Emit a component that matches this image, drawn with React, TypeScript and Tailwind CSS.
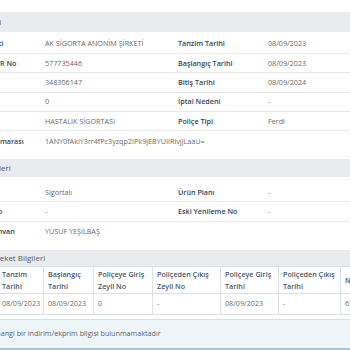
import React from 'react';

type Row = { label: string; value: string; label2?: string; value2?: string };

const policyRows: Row[] = [
  { label: 'Yetki Şirketi', value: 'AK SİGORTA ANONİM ŞİRKETİ', label2: 'Tanzim Tarihi', value2: '08/09/2023' },
  { label: 'Yenileme TR No', value: '577735446', label2: 'Başlangıç Tarihi', value2: '08/09/2023' },
  { label: 'Poliçe No', value: '348306147', label2: 'Bitiş Tarihi', value2: '08/09/2024' },
  { label: 'Tecdit No', value: '0', label2: 'İptal Nedeni', value2: '-' },
  { label: 'Branş', value: 'HASTALIK SİGORTASI', label2: 'Poliçe Tipi', value2: 'Ferdi' },
  { label: 'Kontrol Numarası', value: '1ANY0fAkiY3rr4fPc3yzqp2IPk9jEBYUIIRlvjjLaaU=' },
];

const partyRows: Row[] = [
  { label: 'Rol', value: 'Sigortalı', label2: 'Ürün Planı', value2: '-' },
  { label: 'Sigortalı No', value: '-', label2: 'Eski Yenileme No', value2: '-' },
  { label: 'Sigortalı Unvan', value: 'YUSUF YEŞİLBAŞ' },
];

const columns = [
  { title: 'Sıra', w: 'w-[39px]' },
  { title: 'Tanzim Tarihi', w: 'w-[46px]' },
  { title: 'Başlangıç Tarihi', w: 'w-[50px]' },
  { title: 'Poliçeye Giriş Zeyil No', w: 'w-[59px]' },
  { title: 'Poliçeden Çıkış Zeyil No', w: 'w-[68px]' },
  { title: 'Poliçeye Giriş Tarihi', w: 'w-[58px]' },
  { title: 'Poliçeden Çıkış Tarihi', w: 'w-[62px]' },
  { title: 'Net Prim', w: 'w-[60px]' },
];

const movement = ['1', '08/09/2023', '08/09/2023', '0', '-', '08/09/2023', '-', '67,45'];

function SectionHeader({ title, h }: { title: string; h: string }) {
  return (
    <div className={`${h} bg-[#e9ebee] flex items-center pl-[4px] text-[8px] text-[#5a5a5a] whitespace-nowrap`}>
      {title}
    </div>
  );
}

function InfoRows({ rows }: { rows: Row[] }) {
  return (
    <div className="grid grid-cols-[83px_133px_90px_1fr]">
      {rows.map((r, i) => {
        const last = i === rows.length - 1;
        const line = last ? '' : 'border-b border-[#e6e8eb]';
        return (
          <React.Fragment key={r.label}>
            <div className={`h-[19.4px] flex items-center px-[4px] font-semibold text-[#34465a] whitespace-nowrap ${line}`}>
              {r.label}
            </div>
            {r.label2 ? (
              <>
                <div className={`h-[19.4px] flex items-center px-[4px] text-[#6a6a6a] whitespace-nowrap ${line}`}>{r.value}</div>
                <div className={`h-[19.4px] flex items-center px-[4px] font-semibold text-[#34465a] whitespace-nowrap ${line}`}>
                  {r.label2}
                </div>
                <div className={`h-[19.4px] flex items-center px-[4px] text-[#6a6a6a] whitespace-nowrap ${line}`}>{r.value2}</div>
              </>
            ) : (
              <div className={`col-span-3 h-[19.4px] flex items-center px-[4px] text-[#6a6a6a] whitespace-nowrap ${line}`}>
                {r.value}
              </div>
            )}
          </React.Fragment>
        );
      })}
    </div>
  );
}

export default function App() {
  return (
    <div className="w-[350px] h-[350px] overflow-hidden bg-white" style={{ fontFamily: '"Open Sans", "Liberation Sans", sans-serif' }}>
      <div className="-ml-[42px] w-[600px] pt-[12px] text-[7.2px]">
        {/* Poliçe */}
        <SectionHeader title="Genel Bilgi" h="h-[19.5px]" />
        <div className="pt-[3px]">
          <InfoRows rows={policyRows} />
        </div>

        {/* Taraflar */}
        <div className="mt-[8.5px]">
          <SectionHeader title="Taraf Bilgileri" h="h-[17.5px]" />
          <div className="pt-[6px]">
            <InfoRows rows={partyRows} />
          </div>
        </div>

        {/* Hareketler */}
        <div className="mt-[8.5px]">
          <SectionHeader title="Poliçe Hareket Bilgileri" h="h-[16px]" />
          <table className="table-fixed border-collapse w-[442px] border border-[#dcdfe3]">
            <thead>
              <tr className="h-[27px]">
                {columns.map((c) => (
                  <th
                    key={c.title}
                    className={`${c.w} border border-[#dcdfe3] px-[4px] text-left align-middle font-semibold leading-[12px] text-[#4a5767]`}
                  >
                    {c.title}
                  </th>
                ))}
              </tr>
            </thead>
            <tbody>
              <tr className="h-[21px]">
                {movement.map((v, i) => (
                  <td key={i} className="border border-[#dcdfe3] px-[4px] text-[#6a6a6a] whitespace-nowrap">
                    {v}
                  </td>
                ))}
              </tr>
            </tbody>
          </table>
        </div>

        <div className="mt-[4px] h-[31px] flex items-center pl-[26px] bg-[#eef5f9] border-t border-[#cfe2ea] border-b-2 border-b-[#a8c5cf] text-[#5d6670] whitespace-nowrap">
          Herhangi bir indirim/ekprim bilgisi bulunmamaktadır
        </div>
      </div>
    </div>
  );
}
